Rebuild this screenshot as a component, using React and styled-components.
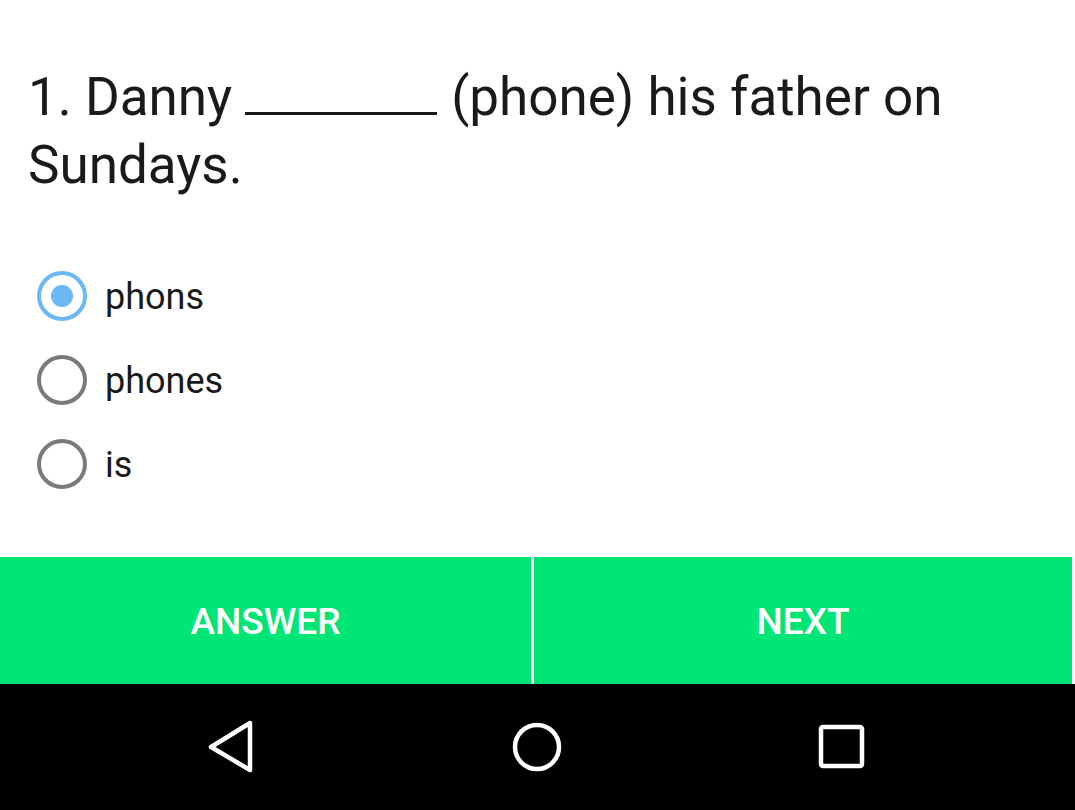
import React, { useState } from "react";
import styled, { createGlobalStyle } from "styled-components";

const Global = createGlobalStyle`
  html, body { margin: 0; padding: 0; background: #ffffff; }
  body { font-family: Roboto, "Noto Sans", "Liberation Sans", sans-serif; }
`;

const Screen = styled.div`
  width: 1075px;
  height: 810px;
  display: flex;
  flex-direction: column;
  background: #ffffff;
  overflow: hidden;
`;

const Content = styled.main`
  flex: 1;
  display: flex;
  flex-direction: column;
  padding: 63px 28px 0 28px;
`;

const Question = styled.h1`
  margin: 0;
  font-size: 53px;
  line-height: 68px;
  font-weight: 400;
  color: #1a1a1a;
  white-space: nowrap;
`;

const Blank = styled.span`
  display: inline-block;
  width: 192px;
  height: 8px;
  margin: 0 14px 0 13px;
  border-bottom: 3px solid #1a1a1a;
  vertical-align: baseline;
`;

const Options = styled.div`
  display: flex;
  flex-direction: column;
  margin-top: 55px;
`;

const OptionRow = styled.label`
  display: flex;
  align-items: center;
  height: 84px;
  gap: 18px;
  cursor: pointer;
`;

const RadioCircle = styled.span`
  box-sizing: border-box;
  width: 50px;
  height: 50px;
  margin-left: 9px;
  border-radius: 50%;
  border: 4px solid ${(p) => (p.$checked ? "#6ab8f5" : "#7a7a7a")};
  display: flex;
  align-items: center;
  justify-content: center;
  flex-shrink: 0;
  &::after {
    content: "";
    width: 22px;
    height: 22px;
    border-radius: 50%;
    background: ${(p) => (p.$checked ? "#6ab8f5" : "transparent")};
  }
`;

const OptionText = styled.span`
  font-size: 36px;
  color: #1a1a1a;
  line-height: 1;
  position: relative;
  top: 1px;
`;

const ButtonBar = styled.div`
  display: grid;
  grid-template-columns: 531px 538px;
  column-gap: 3px;
  height: 127px;
  background: #ffffff;
`;

const ActionButton = styled.button`
  border: none;
  margin: 0;
  background: #00e676;
  color: #ffffff;
  font-family: Roboto, "Noto Sans", "Liberation Sans", sans-serif;
  font-size: 37px;
  font-weight: 500;
  letter-spacing: 0;
  text-transform: uppercase;
  display: flex;
  align-items: center;
  justify-content: center;
  padding: 2px 0 0 0;
  cursor: pointer;
`;

const NavBar = styled.nav`
  height: 126px;
  background: #000000;
  display: grid;
  grid-template-columns: 1fr 1fr 1fr;
  align-items: center;
  justify-items: center;
`;

const NavItem = styled.div`
  display: flex;
  align-items: center;
  justify-content: center;
  width: 60px;
  height: 60px;
  transform: translateX(${(p) => p.$shift}px);
`;

const options = ["phons", "phones", "is"];

export default function App() {
  const [selected, setSelected] = useState(0);
  return (
    <Screen>
      <Global />
      <Content>
        <Question>
          1. Danny<Blank />(phone) his father on
          <br />
          Sundays.
        </Question>
        <Options>
          {options.map((o, i) => (
            <OptionRow key={o} onClick={() => setSelected(i)}>
              <RadioCircle $checked={selected === i} />
              <OptionText>{o}</OptionText>
            </OptionRow>
          ))}
        </Options>
      </Content>
      <ButtonBar>
        <ActionButton>Answer</ActionButton>
        <ActionButton>Next</ActionButton>
      </ButtonBar>
      <NavBar>
        <NavItem $shift={52}>
          <svg width="60" height="60" viewBox="0 0 60 60">
            <path
              d="M49 6 L10 30 L49 53 Z"
              fill="none"
              stroke="#ffffff"
              strokeWidth="4.5"
              strokeLinejoin="round"
            />
          </svg>
        </NavItem>
        <NavItem $shift={0}>
          <svg width="60" height="60" viewBox="0 0 60 60">
            <circle cx="30" cy="30" r="22" fill="none" stroke="#ffffff" strokeWidth="4.5" />
          </svg>
        </NavItem>
        <NavItem $shift={-54}>
          <svg width="60" height="60" viewBox="0 0 60 60">
            <rect x="9" y="10" width="41" height="39" rx="2" fill="none" stroke="#ffffff" strokeWidth="4.5" />
          </svg>
        </NavItem>
      </NavBar>
    </Screen>
  );
}
